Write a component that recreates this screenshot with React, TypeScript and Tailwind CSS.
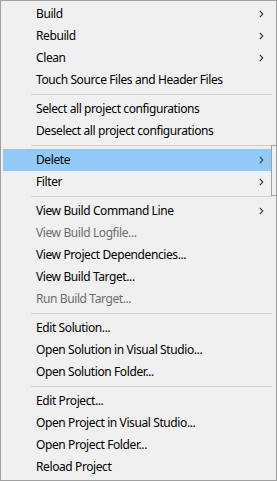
import React from 'react';

type Item =
  | { kind: 'item'; label: string; sub?: boolean; disabled?: boolean; active?: boolean }
  | { kind: 'sep' };

const ITEMS: Item[] = [
  { kind: 'item', label: 'Build', sub: true },
  { kind: 'item', label: 'Rebuild', sub: true },
  { kind: 'item', label: 'Clean', sub: true },
  { kind: 'item', label: 'Touch Source Files and Header Files' },
  { kind: 'sep' },
  { kind: 'item', label: 'Select all project configurations' },
  { kind: 'item', label: 'Deselect all project configurations' },
  { kind: 'sep' },
  { kind: 'item', label: 'Delete', sub: true, active: true },
  { kind: 'item', label: 'Filter', sub: true },
  { kind: 'sep' },
  { kind: 'item', label: 'View Build Command Line', sub: true },
  { kind: 'item', label: 'View Build Logfile...', disabled: true },
  { kind: 'item', label: 'View Project Dependencies...' },
  { kind: 'item', label: 'View Build Target...' },
  { kind: 'item', label: 'Run Build Target...', disabled: true },
  { kind: 'sep' },
  { kind: 'item', label: 'Edit Solution...' },
  { kind: 'item', label: 'Open Solution in Visual Studio...' },
  { kind: 'item', label: 'Open Solution Folder...' },
  { kind: 'sep' },
  { kind: 'item', label: 'Edit Project...' },
  { kind: 'item', label: 'Open Project in Visual Studio...' },
  { kind: 'item', label: 'Open Project Folder...' },
  { kind: 'item', label: 'Reload Project' },
];

function Chevron() {
  return (
    <svg width="5" height="8" viewBox="0 0 5 8" className="shrink-0">
      <path d="M0.8 0.8 L3.8 4 L0.8 7.2" fill="none" stroke="#333" strokeWidth="1.1" />
    </svg>
  );
}

export default function App() {
  return (
    <div
      className="relative w-[277px] h-[481px] overflow-hidden border border-[#a0a0a0] bg-[#f0f0f0] py-[2px] text-[12px] tracking-[-0.4px] text-black"
      style={{ fontFamily: '"Noto Sans", "Open Sans", sans-serif' }}
    >
      {ITEMS.map((it, idx) =>
        it.kind === 'sep' ? (
          <div key={idx} className="h-[7px] flex items-center pl-[30px] pr-[4px]">
            <div className="h-px w-full bg-[#cfcfcf]" />
          </div>
        ) : (
          <div
            key={idx}
            className={
              'mx-[2px] h-[22px] flex items-center pl-[33px] pr-[10px] ' +
              (it.active ? 'bg-[#91c9f7] ' : '') +
              (it.disabled ? 'text-[#6d6d6d]' : 'text-black')
            }
          >
            <span className="flex-1 leading-none whitespace-nowrap">{it.label}</span>
            {it.sub && <Chevron />}
          </div>
        )
      )}

      {/* edge of the open Delete submenu */}
      <div className="absolute left-[270px] top-[144px] w-[20px] h-[51px] border border-[#a0a0a0] bg-[#f0f0f0]" />
    </div>
  );
}
